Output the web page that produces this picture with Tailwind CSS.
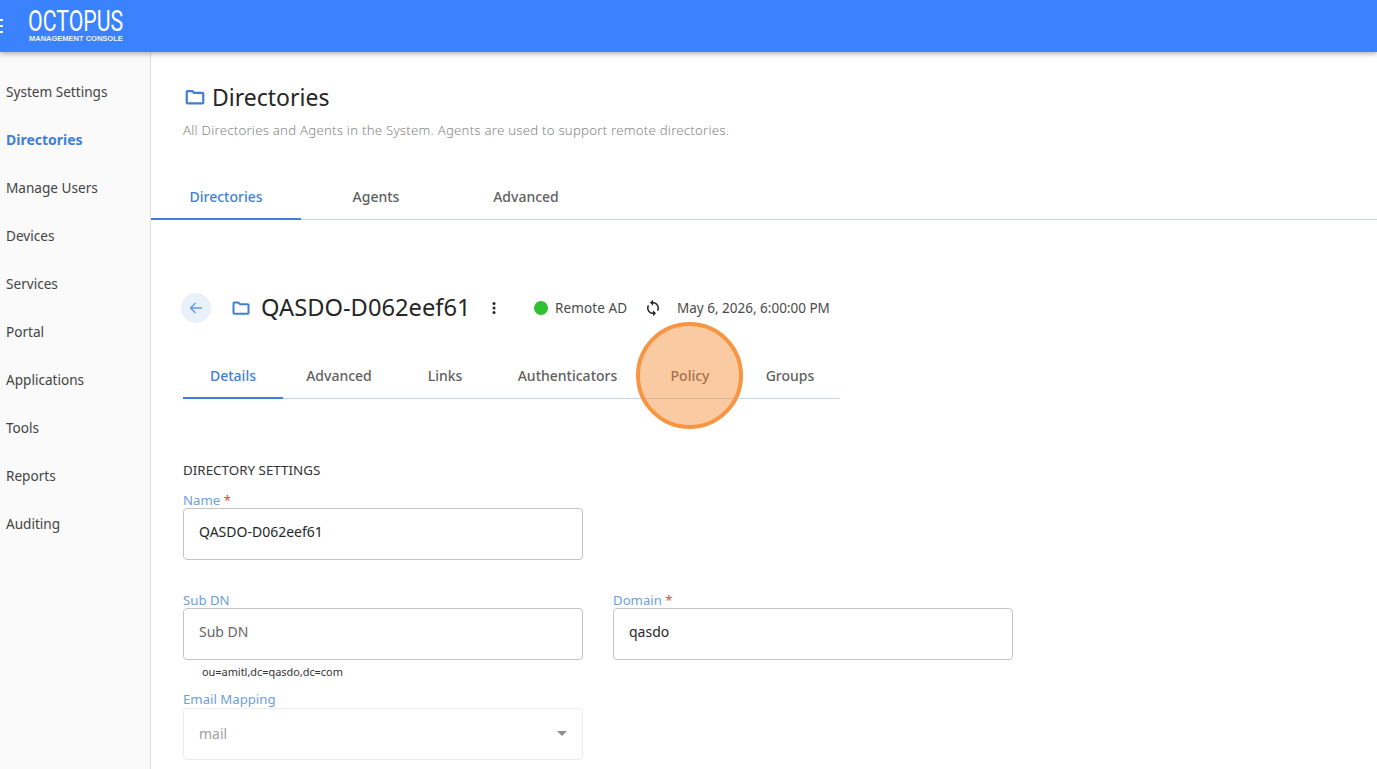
<!DOCTYPE html>
<html>
<head>
<meta charset="utf-8">
<script src="https://cdn.jsdelivr.net/npm/@tailwindcss/browser@4"></script>
</head>
<body class="w-[1377px] h-[769px] overflow-hidden bg-white font-['Noto_Sans',sans-serif] text-[#212121] relative">
<header class="relative z-10 h-[52px] bg-[#3a82ff] shadow-[0_2px_5px_rgba(0,0,0,0.3)] flex items-center text-white">
  <div class="w-[3px] h-[14px] flex flex-col justify-between mr-[25px] mt-[-1px]">
    <span class="h-[2px] bg-white"></span><span class="h-[2px] bg-white"></span><span class="h-[2px] bg-white"></span>
  </div>
  <div class="w-[96px] flex flex-col mt-[-2px]">
    <span class="font-['Roboto',sans-serif] font-normal text-[30px] leading-[25px] h-[25px] origin-left scale-x-[0.71] whitespace-nowrap">OCTOPUS</span>
    <span class="font-['Liberation_Sans',sans-serif] font-bold text-[7.5px] leading-[9px] h-[9px] mt-[1px] ml-[1px] whitespace-nowrap text-white/90">MANAGEMENT CONSOLE</span>
  </div>
</header>
<div class="flex h-[717px]">
  <nav class="w-[151px] shrink-0 bg-[#fafafa] border-r border-[#dcdcdc] pt-[16px] pl-[6px] text-[13.6px] text-[#444]">
    <div class="h-[48px] flex items-center">System Settings</div>
    <div class="h-[48px] flex items-center pb-[2px] font-bold text-[14px] text-[#3f7fd8]">Directories</div>
    <div class="h-[48px] flex items-center">Manage Users</div>
    <div class="h-[48px] flex items-center">Devices</div>
    <div class="h-[48px] flex items-center">Services</div>
    <div class="h-[48px] flex items-center">Portal</div>
    <div class="h-[48px] flex items-center">Applications</div>
    <div class="h-[48px] flex items-center">Tools</div>
    <div class="h-[48px] flex items-center">Reports</div>
    <div class="h-[48px] flex items-center">Auditing</div>
  </nav>
  <main class="flex-1 min-w-0">
    <div class="pl-[32px] pt-[30px] h-[113px]">
      <div class="flex items-center h-[30px] gap-[6px] pl-[1px]">
        <svg class="w-[22px] h-[22px] text-[#3f7fd8]" viewBox="0 0 24 24" fill="none" stroke="currentColor" stroke-width="2.4"><path d="M3 6.5a1 1 0 0 1 1-1h5l2 2h9a1 1 0 0 1 1 1v9.5a1 1 0 0 1-1 1H4a1 1 0 0 1-1-1z" stroke-linejoin="round"/></svg>
        <h1 class="text-[23px] leading-[30px] text-[#262626]">Directories</h1>
      </div>
      <p class="text-[13.2px] leading-[18px] mt-[9px] font-light tracking-[0.24px] text-[#858585] whitespace-nowrap">All Directories and Agents in the System. Agents are used to support remote directories.</p>
    </div>
    <div class="flex h-[55px] border-b border-[#c9d6e6] text-[14px] font-medium text-[#5f5f5f]">
      <div class="w-[150px] h-[55px] flex items-center justify-center pt-[9px] border-b-2 border-[#3f7fd8] text-[#3f7fd8]">Directories</div>
      <div class="w-[150px] h-[55px] flex items-center justify-center pt-[7px]">Agents</div>
      <div class="w-[150px] h-[55px] flex items-center justify-center pt-[7px]">Advanced</div>
    </div>
    <div class="pl-[30px] pt-[71px]">
      <div class="flex items-center h-[34px] text-[13.5px]">
        <div class="w-[30px] h-[30px] rounded-full bg-[#e8f0fa] flex items-center justify-center">
          <svg class="w-[16px] h-[16px] text-[#5f9ae6]" viewBox="0 0 16 16" fill="none" stroke="currentColor" stroke-width="1.4"><path d="M14 8H2.5M7.5 3 2.5 8l5 5"/></svg>
        </div>
        <svg class="w-[20px] h-[20px] ml-[20px] text-[#3f7fd8]" viewBox="0 0 24 24" fill="none" stroke="currentColor" stroke-width="2.4"><path d="M3 6.5a1 1 0 0 1 1-1h5l2 2h9a1 1 0 0 1 1 1v9.5a1 1 0 0 1-1 1H4a1 1 0 0 1-1-1z" stroke-linejoin="round"/></svg>
        <span class="text-[23.7px] ml-[10px] text-[#262626] w-[225px] whitespace-nowrap">QASDO-D062eef61</span>
        <svg class="w-[16px] h-[16px] text-[#262626]" viewBox="0 0 16 16" fill="currentColor"><circle cx="8" cy="3.5" r="1.5"/><circle cx="8" cy="8" r="1.5"/><circle cx="8" cy="12.5" r="1.5"/></svg>
        <span class="w-[14px] h-[14px] rounded-full bg-[#2fc133] ml-[32px]"></span>
        <span class="ml-[7px] w-[82px] whitespace-nowrap tracking-[0.1px] text-[#4a4a4a]">Remote AD</span>
        <svg class="w-[18px] h-[18px] ml-[7px] text-[#262626]" viewBox="0 0 24 24" fill="currentColor"><path d="M12 4V1L8 5l4 4V6c3.31 0 6 2.69 6 6 0 1.01-.25 1.97-.7 2.8l1.46 1.46C19.54 15.03 20 13.57 20 12c0-4.42-3.58-8-8-8zm0 14c-3.31 0-6-2.69-6-6 0-1.01.25-1.97.7-2.8L5.24 7.74C4.46 8.97 4 10.43 4 12c0 4.42 3.58 8 8 8v3l4-4-4-4v3z"/></svg>
        <span class="ml-[15px] whitespace-nowrap text-[#4a4a4a]">May 6, 2026, 6:00:00 PM</span>
      </div>
      <div class="flex w-[657px] h-[58px] mt-[16px] ml-[2px] pt-[12px] border-b border-[#c3d7ea] text-[14px] font-medium text-[#5f5f5f]">
        <div class="w-[100px] h-[46px] flex items-center justify-center border-b-2 border-[#3f7fd8] text-[#3f7fd8]">Details</div>
        <div class="w-[112px] h-[46px] flex items-center justify-center pb-[2px]">Advanced</div>
        <div class="w-[100px] h-[46px] flex items-center justify-center pb-[2px]">Links</div>
        <div class="w-[145px] h-[46px] flex items-center justify-center pb-[2px]">Authenticators</div>
        <div class="w-[100px] h-[46px] flex items-center justify-center pb-[2px]">Policy</div>
        <div class="w-[100px] h-[46px] flex items-center justify-center pb-[2px]">Groups</div>
      </div>
      <div class="ml-[2px] mt-[62px]">
        <div class="text-[13.4px] leading-[18px] text-[#333] h-[20px]">DIRECTORY SETTINGS</div>
        <div class="text-[13.2px] leading-[18px] text-[#6d9fdc] mt-[10px] h-[17px]">Name <span class="text-[#e04a3f]">*</span></div>
        <div class="w-[400px] h-[52px] border border-[#c4c4c4] rounded-[4px] flex items-center pl-[15px] pb-[6px] text-[14px] text-[#262626]">QASDO-D062eef61</div>
        <div class="flex gap-[30px] mt-[31px]">
          <div class="w-[400px]">
            <div class="text-[13.2px] leading-[18px] text-[#6d9fdc] h-[17px]">Sub DN</div>
            <div class="h-[52px] border border-[#c4c4c4] rounded-[4px] flex items-center pl-[15px] pb-[6px] text-[14px] text-[#666]">Sub DN</div>
          </div>
          <div class="w-[400px]">
            <div class="text-[13.2px] leading-[18px] text-[#6d9fdc] h-[17px]">Domain <span class="text-[#e04a3f]">*</span></div>
            <div class="h-[52px] border border-[#c4c4c4] rounded-[4px] flex items-center pl-[15px] pb-[6px] text-[14px] text-[#262626]">qasdo</div>
          </div>
        </div>
        <div class="text-[10.9px] leading-[14px] ml-[19px] mt-[5px] text-[#333] whitespace-nowrap">ou=amitl,dc=qasdo,dc=com</div>
        <div class="text-[13.2px] leading-[18px] text-[#6d9fdc] mt-[11px] h-[18px]">Email Mapping</div>
        <div class="w-[400px] h-[52px] border border-[#ececec] rounded-[4px] flex items-center justify-between pl-[15px] pr-[15px] pb-[2px] text-[14px] text-[#a0a0a0]">
          <span>mail</span>
          <span class="w-0 h-0 border-x-[5px] border-x-transparent border-t-[5px] border-t-[#8e8e8e]"></span>
        </div>
      </div>
    </div>
  </main>
</div>
<div class="absolute left-[636px] top-[322px] w-[107px] h-[107px] rounded-full border-[4px] border-[#f89542] bg-[#f58a32]/45"></div>
</body>
</html>
